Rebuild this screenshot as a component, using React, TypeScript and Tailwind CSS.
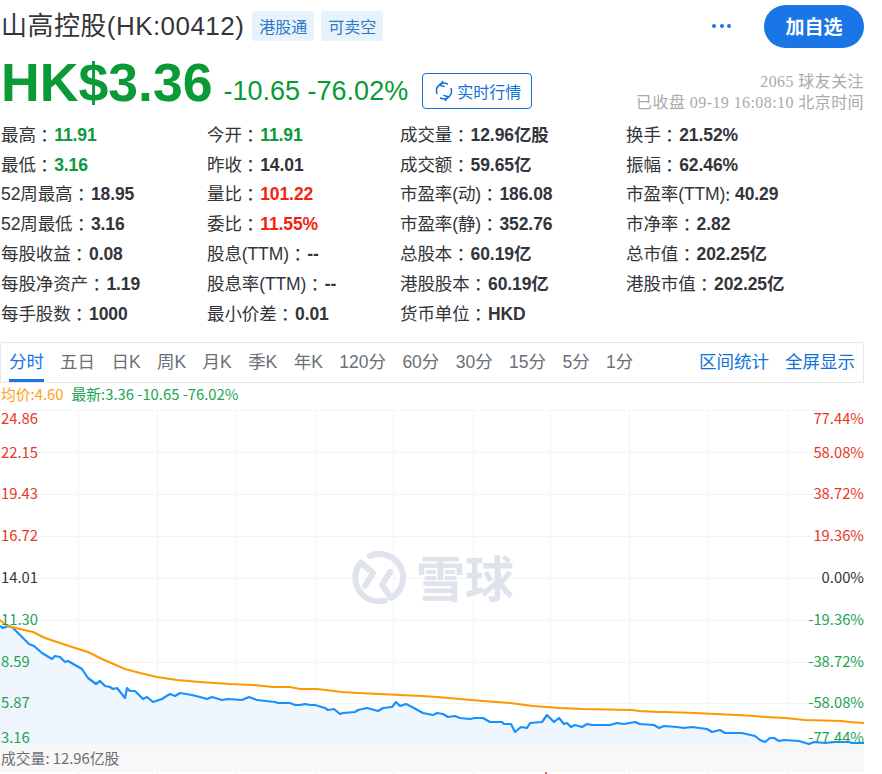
const blue = "0,626 3,628 8,626 12,627 17,632 25,640 29,644 34,646 42,653 52,659 55,656 60,657 65,662 68,661 75,665 82,669 88,678 96,684 100,681 105,686 110,687 113,689 117,688 125,698 127,688 130,691 135,691 143,699 147,697 153,702 162,699 165,697 170,694 175,696 180,693 192,695 200,697 207,699 212,697 222,700 228,699 242,700 249,697 257,700 275,702 278,703 290,703 295,705 300,705 305,704 310,705 315,705 325,708 328,710 334,709 340,714 343,713 355,712 358,710 367,708 378,711 383,708 392,707 396,702 400,706 406,704 412,707 423,713 433,715 437,713 443,714 448,717 455,716 460,718 470,719 475,718 483,718 490,722 502,722 504,724 511,724 515,732 521,727 527,728 530,723 542,722 547,715 554,722 559,718 564,724 567,723 571,727 575,725 582,727 587,724 592,725 602,725 610,725 617,723 624,724 635,722 640,724 654,725 659,728 664,726 677,727 684,728 692,727 707,729 712,732 720,730 725,733 729,733 742,733 755,736 760,740 765,742 770,738 774,738 779,741 784,740 799,741 809,744 814,742 825,743 835,742 849,742 852,743 864,743";
const orange = "0,620 7,626 20,629 33,632 45,638 57,642 72,647 88,652 102,659 125,669 140,673 157,677 177,680 200,682 230,684 253,685 273,687 290,687 300,689 317,689 342,692 358,693 380,694 400,695 422,696 437,697 460,699 483,701 510,703 533,706 560,708 582,709 632,710 639,711 659,712 664,712 695,713 715,714 737,715 755,716 765,717 785,718 805,720 842,721 849,722 864,723";
const RED = "text-[#f5220f]";
const GREEN = "text-[#0a9a38]";
const stats: [string, string, string, string?][][] = [
  [["最高", "：", "11.91", GREEN], ["今开", "：", "11.91", GREEN], ["成交量", "：", "12.96亿股"], ["换手", "：", "21.52%"]],
  [["最低", "：", "3.16", GREEN], ["昨收", "：", "14.01"], ["成交额", "：", "59.65亿"], ["振幅", "：", "62.46%"]],
  [["52周最高", "：", "18.95"], ["量比", "：", "101.22", RED], ["市盈率(动)", "：", "186.08"], ["市盈率(TTM)", ":", "40.29"]],
  [["52周最低", "：", "3.16"], ["委比", "：", "11.55%", RED], ["市盈率(静)", "：", "352.76"], ["市净率", "：", "2.82"]],
  [["每股收益", "：", "0.08"], ["股息(TTM)", "：", "--"], ["总股本", "：", "60.19亿"], ["总市值", "：", "202.25亿"]],
  [["每股净资产", "：", "1.19"], ["股息率(TTM)", "：", "--"], ["港股股本", "：", "60.19亿"], ["港股市值", "：", "202.25亿"]],
  [["每手股数", "：", "1000"], ["最小价差", "：", "0.01"], ["货币单位", "：", "HKD"]],
];
const tabs = ["五日", "日K", "周K", "月K", "季K", "年K", "120分", "60分", "30分", "15分", "5分", "1分"];
const leftLabels: [string, number, string][] = [
  ["24.86", 419, "text-[#e8371f]"], ["22.15", 453, "text-[#e8371f]"], ["19.43", 494, "text-[#e8371f]"], ["16.72", 536, "text-[#e8371f]"],
  ["14.01", 578, "text-[#33353a]"], ["11.30", 620, "text-[#22a353]"], ["8.59", 662, "text-[#22a353]"], ["5.87", 703, "text-[#22a353]"], ["3.16", 738, "text-[#22a353]"],
];
const rightLabels: [string, number, string][] = [
  ["77.44%", 419, "text-[#e8371f]"], ["58.08%", 453, "text-[#e8371f]"], ["38.72%", 494, "text-[#e8371f]"], ["19.36%", 536, "text-[#e8371f]"],
  ["0.00%", 578, "text-[#33353a]"], ["-19.36%", 620, "text-[#22a353]"], ["-38.72%", 662, "text-[#22a353]"], ["-58.08%", 703, "text-[#22a353]"], ["-77.44%", 738, "text-[#22a353]"],
];
const hLines = [410, 452, 494, 536, 578, 620, 662, 703];
const vLines = [78, 157, 235, 315, 393, 473, 550, 629, 708, 787];

export default function App() {
  return (
    <div className="w-[882px] h-[774px] overflow-hidden bg-white font-['Liberation_Sans','Noto_Sans_CJK_SC',sans-serif] text-[#33353a]">
      <div className="w-[864px]">
        <div className="h-[52px] flex items-center">
          <h1 className="text-[26px] pl-[1px] pr-[8px] font-normal tracking-[0.45px]">山高控股(HK:00412)</h1>
          <span className="w-[62px] h-[30px] mr-[7px] flex items-center justify-center rounded-[3px] bg-[#e8f2fb] text-[#2f79c8] text-[16px] font-['Noto_Sans_CJK_SC',sans-serif]">港股通</span>
          <span className="w-[62px] h-[30px] flex items-center justify-center rounded-[3px] bg-[#e8f2fb] text-[#2f79c8] text-[16px] font-['Noto_Sans_CJK_SC',sans-serif]">可卖空</span>
          <span className="ml-auto mr-[33px] flex gap-[3.5px]">
            <i className="w-[4px] h-[4px] rounded-full bg-[#1a75e6]" />
            <i className="w-[4px] h-[4px] rounded-full bg-[#1a75e6]" />
            <i className="w-[4px] h-[4px] rounded-full bg-[#1a75e6]" />
          </span>
          <button className="w-[100px] h-[43px] rounded-full bg-[#1a75e6] text-white text-[19px] font-bold font-['Noto_Sans_CJK_SC',sans-serif]">加自选</button>
        </div>
        <div className="h-[68px] flex items-start">
          <div className="text-[53.6px] font-bold leading-[60px] text-[#0a9a38] pl-[1px]">HK$3.36</div>
          <div className="text-[27px] leading-[32px] text-[#0a9a38] ml-[11px] mt-[23px]">-10.65 -76.02%</div>
          <button className="ml-[14px] mt-[21px] w-[110px] h-[36px] rounded-[4px] border border-[#1272d8] text-[#1272d8] flex items-center justify-center gap-[2px] text-[16px] font-['Noto_Sans_CJK_SC',sans-serif]">
            <svg width="22" height="22" viewBox="0 0 22 22" fill="none" stroke="#1272d8" strokeWidth="1.5" strokeLinecap="round" strokeLinejoin="round">
              <path d="M4 13.5A7.6 7.6 0 0 1 14.5 4" />
              <path d="M9.6 1.5 7.2 5.3 11.2 6.6" />
              <path d="M18 8.5A7.6 7.6 0 0 1 7.5 18" />
              <path d="M12.4 20.5 14.8 16.7 10.8 15.4" />
            </svg>
            实时行情
          </button>
          <div className="ml-auto mt-[19px] text-right text-[16px] leading-[21px] text-[#aaaaaa] font-['Liberation_Serif','Noto_Sans_CJK_SC',serif]">
            <div className="tracking-[0.42px]">2065 球友关注</div>
            <div className="tracking-[0.42px]">已收盘 09-19 16:08:10 北京时间</div>
          </div>
        </div>
        <div className="h-[209px]">
          {stats.map((row, i) => (
            <div key={i} className="h-[29.85px] grid grid-cols-[206px_193px_226px_1fr] items-center text-[17.5px] pl-[1px] tracking-[-0.1px]">
              {row.map(([k, colon, v, c]) => (
                <div key={k} className="flex items-center whitespace-nowrap">
                  <span>{k}</span>
                  <span className="font-['Noto_Sans_CJK_TC',sans-serif]">{colon}</span>
                  <b className={`${colon === ":" ? "ml-[5px]" : "ml-[1px]"} ${c ?? ""}`}>{v}</b>
                </div>
              ))}
            </div>
          ))}
        </div>
        <div className="mt-[13px] h-[41px] border border-[#e8e8ea] flex items-stretch pl-[8px] pr-[8px] text-[17.5px] text-[#6b6f76]">
          <span className="flex items-center text-[#1a75e6] mr-[16px] w-[35px] whitespace-nowrap border-b-[3px] border-[#1a75e6] pt-[2px]">分时</span>
          <div className="flex items-center gap-[16.4px] whitespace-nowrap">
            {tabs.map((t) => (
              <span key={t}>{t}</span>
            ))}
          </div>
          <div className="ml-auto flex items-center gap-[16px] text-[#1272d8] whitespace-nowrap">
            <span>区间统计</span>
            <span>全屏显示</span>
          </div>
        </div>
        <div className="h-[27px] pb-[4px] flex items-center gap-[8px] text-[14.8px] pl-[1px] font-['Noto_Sans_CJK_SC',sans-serif]">
          <span className="text-[#ff9f1c]">均价:4.60</span>
          <span className="text-[#22a353]">最新:3.36 -10.65 -76.02%</span>
        </div>
        <div className="relative h-[335px]">
          <svg width="864" height="335" viewBox="0 410 864 335" className="block">
            {hLines.map((y) => (
              <line key={y} x1="0" x2="864" y1={y + 0.5} y2={y + 0.5} stroke="#f3f4f6" />
            ))}
            {vLines.map((x) => (
              <line key={x} x1={x + 0.5} x2={x + 0.5} y1="410" y2="745" stroke="#f3f4f6" />
            ))}
            <polygon points={`0,745 ${blue} 864,745`} fill="#eff6fe" />
            <polyline points={blue} fill="none" stroke="#1890ff" strokeWidth="2.2" strokeLinejoin="round" />
            <polyline points={orange} fill="none" stroke="#ff9800" strokeWidth="2" strokeLinejoin="round" />
            <g fill="none" stroke="#dfe3ec" strokeWidth="6" strokeLinecap="round" strokeLinejoin="round">
              <path d="M370 556A23.5 23.5 0 0 1 391 598L382 585L390 572" />
              <path d="M385 600.5A23.5 23.5 0 0 1 361 562.5L373 573L365 586" />
            </g>
          </svg>
          <div className="absolute left-[416px] top-[137px] text-[49px] leading-[58px] font-bold text-[#dfe3ec] font-['Noto_Sans_CJK_SC',sans-serif]">雪球</div>
          {leftLabels.map(([t, y, c]) => (
            <span key={t} className={`absolute left-[1px] text-[14.8px] leading-[18px] font-['Noto_Sans_CJK_SC',sans-serif] ${c}`} style={{ top: y - 410 - 10 }}>{t}</span>
          ))}
          {rightLabels.map(([t, y, c]) => (
            <span key={t} className={`absolute right-0 text-[14.8px] leading-[18px] font-['Noto_Sans_CJK_SC',sans-serif] ${c}`} style={{ top: y - 410 - 10 }}>{t}</span>
          ))}
        </div>
        <div className="h-[27px] bg-[#f8f8f8] flex items-center pl-[1px] text-[14.8px] text-[#6b6f76] font-['Noto_Sans_CJK_SC',sans-serif]">成交量: 12.96亿股</div>
        <svg width="864" height="2" className="block">
          {vLines.map((x) => (
            <line key={x} x1={x + 0.5} x2={x + 0.5} y1="0" y2="2" stroke="#f0f1f3" />
          ))}
          <circle cx="546" cy="1" r="1" fill="#e8371f" />
        </svg>
      </div>
    </div>
  );
}
